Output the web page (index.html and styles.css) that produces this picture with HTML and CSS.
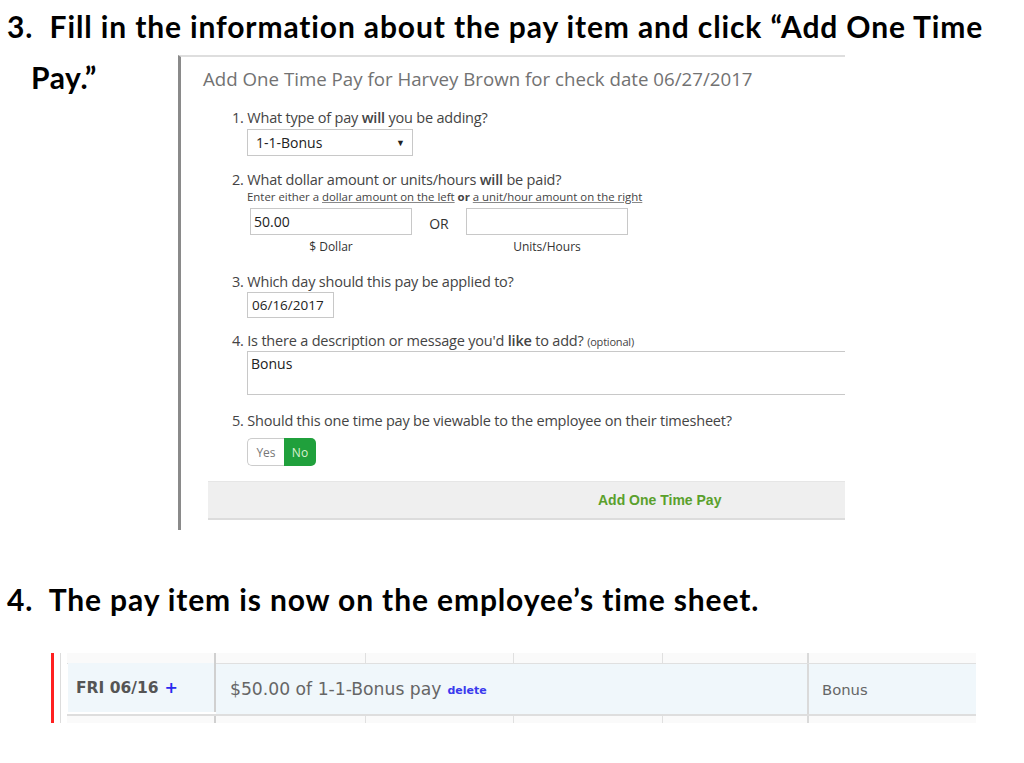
FILE: index.html
```html
<!DOCTYPE html>
<html>
<head>
<meta charset="utf-8">
<link rel="stylesheet" href="styles.css">
</head>
<body>
<h2 class="step">3.&nbsp; Fill in the information about the pay item and click “Add One Time</h2>
<div class="step-row">
  <div class="step-cont">Pay.”</div>
  <div class="panel">
    <div class="panel-title">Add One Time Pay for Harvey Brown for check date 06/27/2017</div>
    <div class="form">
      <div class="q q1">
        <div class="q-label">1. What type of pay <b>will</b> you be adding?</div>
        <div class="select"><span>1-1-Bonus</span><span class="caret">▼</span></div>
      </div>
      <div class="q q2">
        <div class="q-label">2. What dollar amount or units/hours <b>will</b> be paid?</div>
        <div class="hint">Enter either a <u>dollar amount on the left</u> <b>or</b> <u>a unit/hour amount on the right</u></div>
        <div class="amounts">
          <div class="amt">
            <div class="input wide">50.00</div>
            <div class="amt-label">$ Dollar</div>
          </div>
          <div class="or">OR</div>
          <div class="amt">
            <div class="input wide"></div>
            <div class="amt-label">Units/Hours</div>
          </div>
        </div>
      </div>
      <div class="q q3">
        <div class="q-label">3. Which day should this pay be applied to?</div>
        <div class="input date">06/16/2017</div>
      </div>
      <div class="q q4">
        <div class="q-label">4. Is there a description or message you'd <b>like</b> to add? <span class="opt">(optional)</span></div>
        <div class="textarea">Bonus</div>
      </div>
      <div class="q q5">
        <div class="q-label">5. Should this one time pay be viewable to the employee on their timesheet?</div>
        <div class="toggle"><span class="t-yes">Yes</span><span class="t-no">No</span></div>
      </div>
    </div>
    <div class="action-bar"><span class="action">Add One Time Pay</span></div>
  </div>
</div>

<h2 class="step step4">4.&nbsp; The pay item is now on the employee’s time sheet.</h2>

<div class="ts">
  <div class="ts-red"></div>
  <div class="ts-gray"></div>
  <div class="ts-grid">
    <div class="strip"><span></span><span></span><span></span><span></span><span></span><span></span></div>
    <div class="ts-row">
      <div class="c-day">FRI 06/16 <span class="plus">+</span></div>
      <div class="c-pay">$50.00 of 1-1-Bonus pay <span class="del">delete</span></div>
      <div class="c-desc">Bonus</div>
    </div>
    <div class="strip bottom"><span></span><span></span><span></span><span></span><span></span><span></span></div>
  </div>
</div>
</body>
</html>
```
FILE: styles.css
```css
* { box-sizing: border-box; }
body {
  margin: 0;
  background: #fff;
  font-family: "Open Sans", sans-serif;
  color: #333;
  width: 1024px;
}
.step {
  margin: 0;
  font-family: Lato, sans-serif;
  font-weight: 700;
  font-size: 30px;
  letter-spacing: 0.87px;
  color: #000;
  padding: 8px 0 0 7px;
  line-height: 36px;
  white-space: nowrap;
}
.step-row {
  display: flex;
  margin-top: 11px;
}
.step-cont {
  font-family: Lato, sans-serif;
  font-weight: 700;
  font-size: 30px;
  letter-spacing: 0.6px;
  color: #000;
  width: 178px;
  padding-left: 31px;
  padding-top: 4px;
  line-height: 36px;
}
.panel {
  width: 667px;
  height: 475px;
  border-left: 3px solid #8a8a8a;
  border-top: 2px solid #dedede;
  padding-left: 27px;
  display: flex;
  flex-direction: column;
}
.panel-title {
  font-size: 18.7px;
  color: #727272;
  padding-top: 10px;
  margin-left: -5px;
  line-height: 24px;
  white-space: nowrap;
}
.form {
  padding-left: 24px;
  padding-top: 18px;
  color: #444;
  font-size: 14.5px;
}
.q-label { line-height: 18px; letter-spacing: -0.2px; white-space: nowrap; }
.q-label b { font-weight: 600; }
.select {
  margin: 2px 0 0 15px;
  width: 166px;
  height: 27px;
  border: 1px solid #c8c8c8;
  display: flex;
  justify-content: space-between;
  align-items: center;
  padding: 0 7px 0 8px;
  font-size: 14px;
  color: #222;
}
.caret { font-size: 9px; color: #222; }
.q2 { margin-top: 15px; }
.hint {
  font-size: 11.4px;
  color: #444;
  margin: 1px 0 0 15px;
  line-height: 14px;
  white-space: nowrap;
}
.hint u { text-decoration-color: #888; }
.hint b { font-weight: 700; }
.amounts {
  display: flex;
  align-items: flex-start;
  margin: 4px 0 0 18px;
}
.input {
  border: 1px solid #c8c8c8;
  height: 27px;
  font-size: 14px;
  color: #222;
  padding: 0 0 0 3px;
  line-height: 25px;
}
.input.wide { width: 162px; }
.amt-label {
  text-align: center;
  font-size: 12px;
  line-height: 14px;
  color: #333;
  margin-top: 5px;
}
.or {
  width: 54px;
  text-align: center;
  padding-top: 6px;
  font-size: 14px;
  color: #333;
}
.q3 { margin-top: 19px; }
.input.date {
  margin: 1px 0 0 15px;
  width: 87px;
  height: 26px;
  padding-left: 4px;
  font-size: 13.5px;
  line-height: 24px;
}
.q4 { margin-top: 14px; }
.opt { font-size: 11px; }
.textarea {
  margin: 0 0 0 15px;
  height: 44px;
  border: 1px solid #c8c8c8;
  border-right: none;
  font-size: 14px;
  color: #222;
  padding: 2px 0 0 3px;
}
.q5 { margin-top: 17px; }
.toggle {
  display: flex;
  margin: 8px 0 0 15px;
  width: 70px;
  height: 28px;
  font-size: 12px;
}
.t-yes {
  width: 37px;
  border: 1px solid #ccc;
  border-right: none;
  border-radius: 5px 0 0 5px;
  color: #777;
  display: flex;
  align-items: center;
  justify-content: center;
}
.t-no {
  width: 32px;
  background: #20a03c;
  color: #d8f0d0;
  border-radius: 0 5px 5px 0;
  display: flex;
  align-items: center;
  justify-content: center;
}
.action-bar {
  margin-top: 15px;
  height: 39px;
  background: #efefef;
  border-top: 1px solid #e6e6e6;
  border-bottom: 2px solid #dcdcdc;
  padding-left: 390px;
  display: flex;
  align-items: center;
}
.action {
  font-family: "Liberation Sans", Arial, sans-serif;
  font-weight: 700;
  font-size: 14px;
  color: #5aa02c;
}
.step4 {
  padding-top: 51px;
}
.ts {
  display: flex;
  margin: 36px 0 0 51px;
  height: 70px;
}
.ts-red { width: 3px; background: #ff2020; }
.ts-gray { width: 1px; background: #dcdcdc; margin-left: 6px; }
.ts-grid {
  margin-left: 6px;
  width: 909px;
  display: flex;
  flex-direction: column;
}
.strip {
  display: grid;
  grid-template-columns: 149px 150px 148px 149px 146px 167px;
  height: 10px;
  background: #fafafa;
}
.strip.bottom { height: 7px; }
.strip span { border-right: 1px solid #e0e0e0; }
.strip span:first-child { border-right: 2px solid #d0d0d0; }
.strip span:nth-child(5) { border-right: 2px solid #dadada; }
.strip span:last-child { border-right: none; }
.ts-row {
  display: grid;
  grid-template-columns: 149px 593px 167px;
  height: 53px;
  border-top: 1px solid #e0e0e0;
  border-bottom: 2px solid #dedede;
  font-family: "DejaVu Sans", sans-serif;
}
.ts-row > div {
  display: flex;
  align-items: center;
  background: #f0f7fb;
  white-space: nowrap;
}
.c-day {
  border-right: 2px solid #d0d0d0;
  font-weight: 700;
  font-size: 15.5px;
  color: #555;
  padding-left: 8px;
  margin: -1px 0 2px 1px;
}
.plus { color: #2a2aee; margin-left: 6px; font-size: 16px; }
.c-pay {
  border-right: 2px solid #dadada;
  padding-left: 14px;
  font-size: 17.2px;
  color: #666;
}
.del {
  color: #3a3aee;
  font-weight: 700;
  font-size: 11px;
  margin-left: 6px;
  margin-top: 3px;
}
.c-desc {
  padding-left: 13px;
  font-size: 14.8px;
  color: #666;
}
```
